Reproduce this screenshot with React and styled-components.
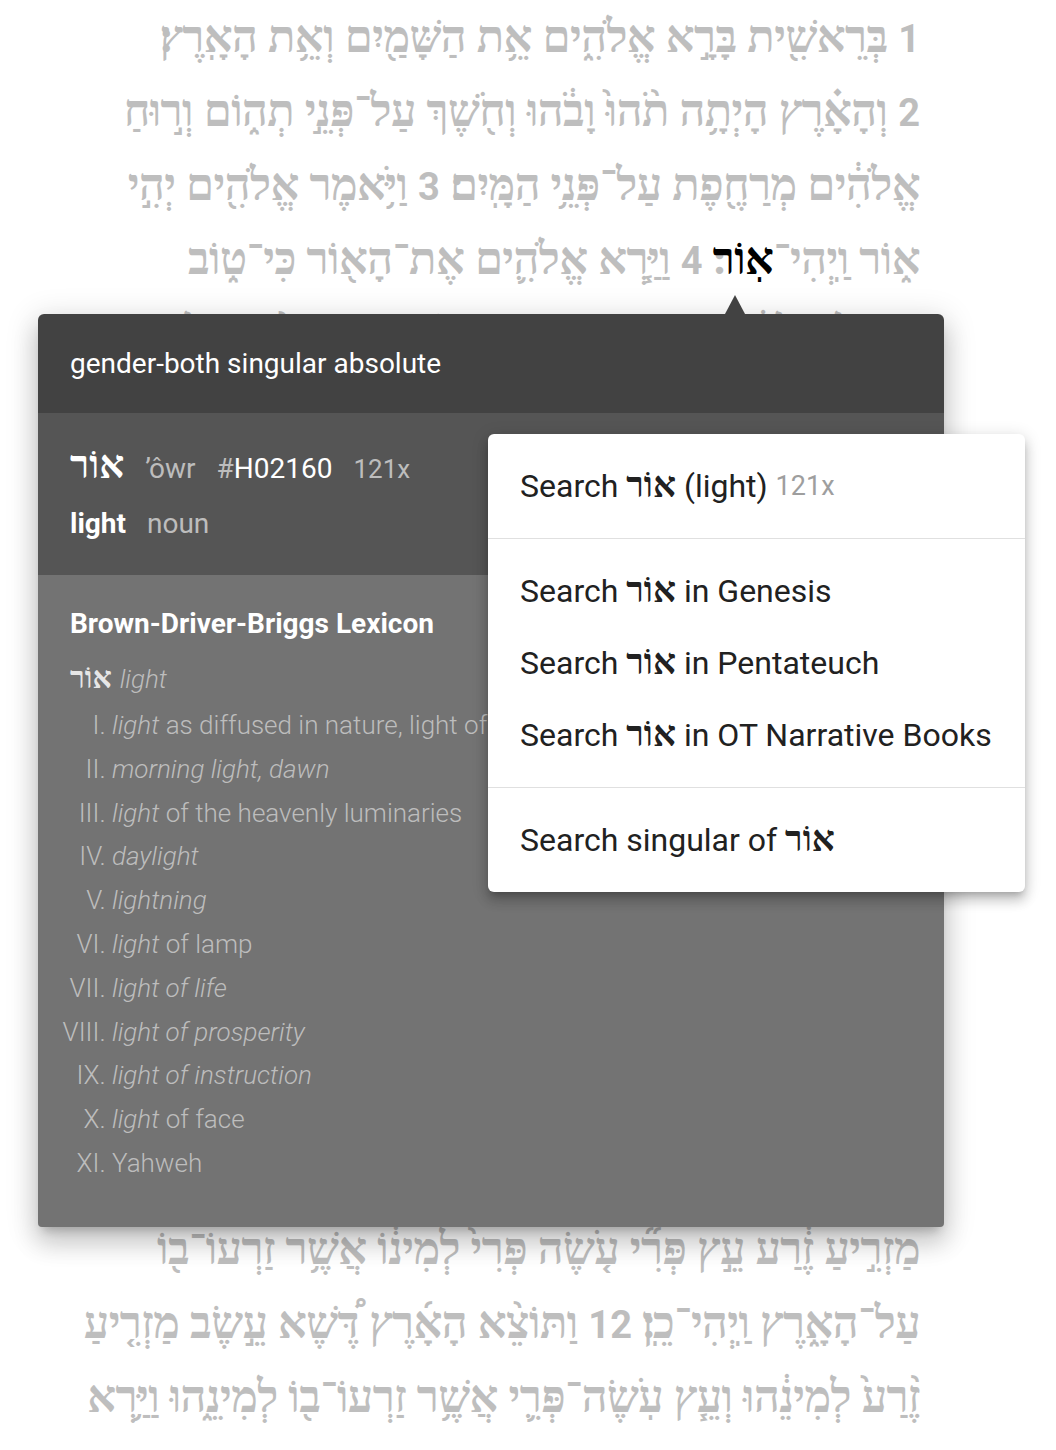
import React from "react";
import styled, { createGlobalStyle } from "styled-components";

const GlobalStyle = createGlobalStyle`
  body {
    margin: 0;
    background: #fff;
    font-family: Roboto, "Liberation Sans", sans-serif;
  }
`;

const Page = styled.div`
  position: relative;
  width: 1056px;
  height: 1450px;
  overflow: hidden;
`;

const Passage = styled.div`
  padding: 0 136px 0 40px;
  font-family: "Liberation Serif", serif;
  font-size: 45px;
  font-weight: 700;
  letter-spacing: -0.6px;
  color: #bebebe;
  text-align: right;
  white-space: nowrap;
`;

const Line = styled.div`
  height: 74px;
  line-height: 74px;
  margin-bottom: ${({ $gap }) => $gap || 0}px;
`;

const VerseNum = styled.span`
  font-family: Roboto, sans-serif;
  font-weight: 700;
  font-size: 38px;
  letter-spacing: 0;
  line-height: 1;
`;

const Selected = styled.span`
  color: #000;
`;

const Popover = styled.div`
  position: absolute;
  left: 38px;
  top: 314px;
  width: 906px;
  border-radius: 6px;
  color: #fff;
  box-shadow: 0 8px 10px -5px rgba(0, 0, 0, 0.2),
    0 16px 24px 2px rgba(0, 0, 0, 0.14), 0 6px 30px 5px rgba(0, 0, 0, 0.12);

  &::before {
    content: "";
    position: absolute;
    left: 687px;
    top: -19px;
    border-left: 10px solid transparent;
    border-right: 10px solid transparent;
    border-bottom: 19px solid #424242;
  }
`;

const Morph = styled.div`
  background: #424242;
  border-radius: 6px 6px 0 0;
  padding: 32px 32px;
  font-size: 28px;
  line-height: 35px;
`;

const WordInfo = styled.div`
  background: #555555;
  padding: 32px 32px 31px;
  display: flex;
  flex-direction: column;
  gap: 19px;
`;

const InfoRow = styled.div`
  height: 40px;
  display: flex;
  align-items: baseline;
  gap: 21px;
  font-size: 28px;
  line-height: 40px;
`;

const Heb = styled.span`
  font-family: "Liberation Serif", serif;
  font-size: ${({ $size }) => $size || "1.12em"};
  font-weight: 700;
  line-height: 1;
  color: ${({ $tone }) => $tone || "inherit"};
`;

const Muted = styled.span`
  color: ${({ $tone }) => $tone || "#bdbdbd"};
  font-size: ${({ $size }) => $size || "inherit"};
`;

const Gloss = styled.span`
  font-weight: 700;
`;

const Lexicon = styled.div`
  background: #737373;
  border-radius: 0 0 4px 4px;
  padding: 31px 32px 41px;
`;

const LexTitle = styled.div`
  font-size: 28px;
  font-weight: 700;
  line-height: 36px;
  margin-bottom: 15px;
`;

const EntryHead = styled.div`
  height: 44px;
  margin-bottom: 3px;
  font-size: 26px;
  font-weight: 300;
  line-height: 44px;
  color: #bdbdbd;

  i {
    margin-left: 8px;
  }
`;

const Senses = styled.ol`
  list-style: upper-roman;
  margin: 0;
  padding-left: 42px;
  font-size: 26px;
  font-weight: 300;
  line-height: 43.8px;
  color: #bdbdbd;
  white-space: nowrap;
`;

const Menu = styled.div`
  position: absolute;
  left: 488px;
  top: 434px;
  width: 537px;
  background: #fff;
  border-radius: 6px;
  box-shadow: 0 5px 6px -3px rgba(0, 0, 0, 0.2),
    0 9px 12px 1px rgba(0, 0, 0, 0.14), 0 3px 16px 2px rgba(0, 0, 0, 0.12);
`;

const MenuGroup = styled.div`
  padding: 16px 0;
  border-top: ${({ $first }) => ($first ? "none" : "1px solid #e0e0e0")};
`;

const MenuItem = styled.div`
  height: 72px;
  display: flex;
  align-items: center;
  padding: 0 32px;
  font-size: 32px;
  color: #212121;
  white-space: nowrap;
`;

const WORD = "אוֹר";

const lines = [
  [<VerseNum>1</VerseNum>, " בְּרֵאשִׁ֖ית בָּרָ֣א אֱלֹהִ֑ים אֵ֥ת הַשָּׁמַ֖יִם וְאֵ֥ת הָאָֽרֶץ׃"],
  [<VerseNum>2</VerseNum>, " וְהָאָ֗רֶץ הָיְתָ֥ה תֹ֨הוּ֙ וָבֹ֔הוּ וְחֹ֖שֶׁךְ עַל־פְּנֵ֣י תְה֑וֹם וְר֣וּחַ"],
  ["אֱלֹהִ֔ים מְרַחֶ֖פֶת עַל־פְּנֵ֥י הַמָּֽיִם׃ ", <VerseNum>3</VerseNum>, " וַיֹּ֥אמֶר אֱלֹהִ֖ים יְהִ֣י"],
  ["א֑וֹר וַֽיְהִי־", <Selected>אֽוֹר</Selected>, "׃ ", <VerseNum>4</VerseNum>, " וַיַּ֧רְא אֱלֹהִ֛ים אֶת־הָא֖וֹר כִּי־ט֑וֹב"],
  ["וַיַּבְדֵּ֣ל אֱלֹהִ֔ים בֵּ֥ין הָא֖וֹר וּבֵ֥ין הַחֹֽשֶׁךְ׃ ", <VerseNum>5</VerseNum>, " וַיִּקְרָ֨א אֱלֹהִ֤ים"],
  ["לָאוֹר֙ י֔וֹם וְלַחֹ֖שֶׁךְ קָ֣רָא לָ֑יְלָה וַֽיְהִי־עֶ֥רֶב וַֽיְהִי־בֹ֖קֶר י֥וֹם"],
  ["אֶחָֽד׃"],
  [<VerseNum>6</VerseNum>, " וַיֹּ֣אמֶר אֱלֹהִ֔ים יְהִ֥י רָקִ֖יעַ בְּת֣וֹךְ הַמָּ֑יִם וִיהִ֣י מַבְדִּ֔יל"],
  ["בֵּ֥ין מַ֖יִם לָמָֽיִם׃ ", <VerseNum>7</VerseNum>, " וַיַּ֣עַשׂ אֱלֹהִים֮ אֶת־הָרָקִיעַ֒ וַיַּבְדֵּ֗ל"],
  ["בֵּ֤ין הַמַּ֨יִם֙ אֲשֶׁר֙ מִתַּ֣חַת לָרָקִ֔יעַ וּבֵ֣ין הַמַּ֔יִם אֲשֶׁ֖ר"],
  ["מֵעַ֣ל לָרָקִ֑יעַ וַֽיְהִי־כֵֽן׃ ", <VerseNum>8</VerseNum>, " וַיִּקְרָ֧א אֱלֹהִ֛ים לָֽרָקִ֖יעַ שָׁמָ֑יִם"],
  ["וַֽיְהִי־עֶ֥רֶב וַֽיְהִי־בֹ֖קֶר י֥וֹם שֵׁנִֽי׃"],
  [<VerseNum>9</VerseNum>, " וַיֹּ֣אמֶר אֱלֹהִ֗ים יִקָּו֨וּ הַמַּ֜יִם מִתַּ֤חַת הַשָּׁמַ֨יִם֙ אֶל־מָק֣וֹם"],
  ["אֶחָ֔ד וְתֵרָאֶ֖ה הַיַּבָּשָׁ֑ה וַֽיְהִי־כֵֽן׃ ", <VerseNum>10</VerseNum>, " וַיִּקְרָ֨א אֱלֹהִ֤ים"],
  ["לַיַּבָּשָׁה֙ אֶ֔רֶץ וּלְמִקְוֵ֥ה הַמַּ֖יִם קָרָ֣א יַמִּ֑ים וַיַּ֥רְא אֱלֹהִ֖ים"],
  ["כִּי־טֽוֹב׃ ", <VerseNum>11</VerseNum>, " וַיֹּ֣אמֶר אֱלֹהִ֗ים תַּֽדְשֵׁ֤א הָאָ֨רֶץ֙ דֶּ֔שֶׁא עֵ֚שֶׂב"],
  ["מַזְרִ֣יעַ זֶ֔רַע עֵ֣ץ פְּרִ֞י עֹ֤שֶׂה פְּרִי֙ לְמִינ֔וֹ אֲשֶׁ֥ר זַרְעוֹ־ב֖וֹ"],
  ["עַל־הָאָ֑רֶץ וַֽיְהִי־כֵֽן׃ ", <VerseNum>12</VerseNum>, " וַתּוֹצֵ֨א הָאָ֜רֶץ דֶּ֠שֶׁא עֵ֣שֶׂב מַזְרִ֤יעַ"],
  ["זֶ֨רַע֙ לְמִינֵ֔הוּ וְעֵ֧ץ עֹֽשֶׂה־פְּרִ֛י אֲשֶׁ֥ר זַרְעוֹ־ב֖וֹ לְמִינֵ֑הוּ וַיַּ֥רְא"],
];

// extra space where a hidden paragraph ends (petuha)
const gaps = { 6: 14, 11: 14 };

const senses = [
  <><i>light</i> as diffused in nature, light of day</>,
  <i>morning light, dawn</i>,
  <><i>light</i> of the heavenly luminaries</>,
  <i>daylight</i>,
  <i>lightning</i>,
  <><i>light</i> of lamp</>,
  <i>light of life</i>,
  <i>light of prosperity</i>,
  <i>light of instruction</i>,
  <><i>light</i> of face</>,
  <>Yahweh</>,
];

export default function App() {
  return (
    <Page>
      <GlobalStyle />
      <Passage dir="rtl">
        {lines.map((parts, i) => (
          <Line key={i} $gap={gaps[i]}>
            {parts.map((p, j) => (
              <React.Fragment key={j}>{p}</React.Fragment>
            ))}
          </Line>
        ))}
      </Passage>

      <Popover>
        <Morph>gender-both singular absolute</Morph>
        <WordInfo>
          <InfoRow>
            <Heb $size="39px">{WORD}</Heb>
            <Muted>’ôwr</Muted>
            <span>
              <Muted>#</Muted>H02160
            </span>
            <Muted $size="26px">121x</Muted>
          </InfoRow>
          <InfoRow>
            <Gloss>light</Gloss>
            <Muted>noun</Muted>
          </InfoRow>
        </WordInfo>
        <Lexicon>
          <LexTitle>Brown-Driver-Briggs Lexicon</LexTitle>
          <EntryHead>
            <Heb $size="30px" $tone="#e6e6e6">{WORD}</Heb>
            <i>light</i>
          </EntryHead>
          <Senses>
            {senses.map((s, i) => (
              <li key={i}>{s}</li>
            ))}
          </Senses>
        </Lexicon>
      </Popover>

      <Menu>
        <MenuGroup $first>
          <MenuItem>
            Search&nbsp;<Heb>{WORD}</Heb>&nbsp;(light)&nbsp;
            <Muted $tone="#9e9e9e" $size="27px">121x</Muted>
          </MenuItem>
        </MenuGroup>
        <MenuGroup>
          <MenuItem>
            Search&nbsp;<Heb>{WORD}</Heb>&nbsp;in Genesis
          </MenuItem>
          <MenuItem>
            Search&nbsp;<Heb>{WORD}</Heb>&nbsp;in Pentateuch
          </MenuItem>
          <MenuItem>
            Search&nbsp;<Heb>{WORD}</Heb>&nbsp;in OT Narrative Books
          </MenuItem>
        </MenuGroup>
        <MenuGroup>
          <MenuItem>
            Search singular of&nbsp;<Heb>{WORD}</Heb>
          </MenuItem>
        </MenuGroup>
      </Menu>
    </Page>
  );
}
